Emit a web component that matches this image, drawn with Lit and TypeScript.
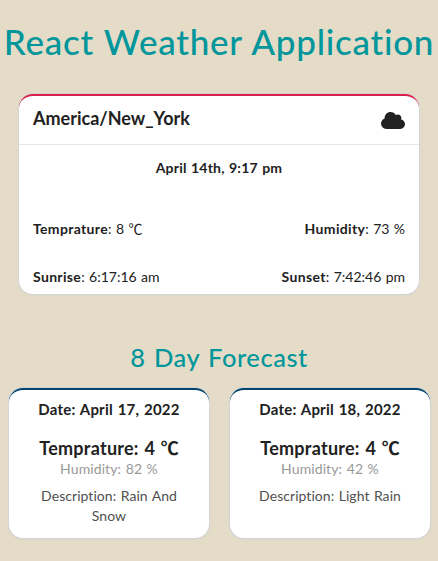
import { LitElement, html, css } from "lit";
import { customElement, property } from "lit/decorators.js";

interface Day {
  date: string;
  temperature: number;
  humidity: number;
  description: string;
}

const DAYS: Day[] = [
  { date: "April 17, 2022", temperature: 4, humidity: 82, description: "Rain And Snow" },
  { date: "April 18, 2022", temperature: 4, humidity: 42, description: "Light Rain" },
];

@customElement("forecast-card")
export class ForecastCard extends LitElement {
  @property({ attribute: false }) day!: Day;

  static styles = css`
    :host {
      display: block;
      box-sizing: border-box;
      width: 200px;
      height: 150px;
      padding: 9px 14px 0;
      border-top: 2px solid #004470;
      border-radius: 14px;
      background: #fff;
      box-shadow: 0 0 0 1px #d4d4d5, 0 1px 3px 0 #d4d4d5;
      text-align: center;
      color: #212121;
    }
    .date {
      font-size: 15px;
      font-weight: 700;
      line-height: 20px;
      letter-spacing: 0.2px;
      word-spacing: 1px;
    }
    .temperature {
      height: 26px;
      margin-top: 16px;
      font-size: 18px;
      font-weight: 700;
      line-height: 26px;
      letter-spacing: 0.25px;
      word-spacing: 1px;
      white-space: nowrap;
    }
    .unit {
      font-family: "Noto Sans CJK JP", sans-serif;
      line-height: 1;
      letter-spacing: 0;
    }
    .humidity {
      margin-top: -1px;
      font-size: 14px;
      line-height: 18px;
      letter-spacing: 0.1px;
      color: #999;
    }
    .description {
      margin-top: 8px;
      padding: 0 10px;
      font-size: 14px;
      line-height: 20px;
      letter-spacing: 0.05px;
      color: #505050;
    }
  `;

  render() {
    const d = this.day;
    return html`
      <div class="date">Date: ${d.date}</div>
      <div class="temperature">Temprature: ${d.temperature} <span class="unit">℃</span></div>
      <div class="humidity">Humidity: ${d.humidity} %</div>
      <div class="description">${`Description: ${d.description}`}</div>
    `;
  }
}

@customElement("app-root")
export class AppRoot extends LitElement {
  static styles = css`
    :host {
      display: block;
      box-sizing: border-box;
      height: 561px;
      overflow: hidden;
      background: #e5dcc7;
      color: #212121;
      font-family: Lato, "DejaVu Sans", sans-serif;
      font-size: 14px;
      font-variant-ligatures: none;
      line-height: 20px;
      word-spacing: 0.8px;
    }
    h1,
    h2 {
      margin: 0;
      color: #00969b;
      font-weight: 500;
      text-align: center;
      white-space: nowrap;
    }
    h1 {
      padding-top: 18px;
      font-size: 35px;
      line-height: 46px;
      letter-spacing: 0.74px;
    }
    h2 {
      margin-top: 46px;
      font-size: 25.5px;
      line-height: 34px;
      letter-spacing: 0.53px;
      word-spacing: 1.5px;
    }
    .current {
      box-sizing: border-box;
      width: 400px;
      height: 200px;
      margin: 30px auto 0;
      border-top: 2px solid #db2149;
      border-radius: 14px;
      background: #fff;
      box-shadow: 0 0 0 1px #d4d4d5, 0 1px 3px 0 #d4d4d5;
    }
    .head {
      display: flex;
      align-items: center;
      justify-content: space-between;
      box-sizing: border-box;
      height: 49px;
      padding: 0 14px;
      border-bottom: 1px solid #e7e7e7;
    }
    .zone {
      padding-bottom: 4px;
      font-size: 18px;
      font-weight: 700;
      line-height: 24px;
    }
    .cloud {
      display: block;
      width: 24px;
      height: 17px;
      fill: #212121;
    }
    .time {
      margin-top: 13px;
      text-align: center;
      font-weight: 700;
      letter-spacing: 0.2px;
    }
    .row {
      display: flex;
      justify-content: space-between;
      height: 20px;
      margin-top: 28px;
      padding: 0 14px;
    }
    .row b {
      letter-spacing: 0.34px;
    }
    .time + .row {
      margin-top: 41px;
    }
    .unit {
      font-family: "Noto Sans CJK JP", sans-serif;
      font-weight: 400;
      line-height: 1;
    }
    .days {
      display: flex;
      justify-content: space-between;
      padding: 14px 8px 0 9px;
    }
  `;

  render() {
    return html`
      <h1>React Weather Application</h1>
      <section class="current">
        <div class="head">
          <span class="zone">America/New_York</span>
          <svg class="cloud" viewBox="0 32 640 448" aria-hidden="true">
            <path d="M537.6 226.6c4.1-10.7 6.4-22.4 6.4-34.6 0-53-43-96-96-96-19.7 0-38.1 6-53.3 16.2C367 64.2 315.3 32 256 32c-88.4 0-160 71.6-160 160 0 2.7.1 5.4.2 8.1C40.2 219.8 0 273.2 0 336c0 79.5 64.5 144 144 144h368c70.7 0 128-57.3 128-128 0-61.9-44-113.6-102.4-125.4z" />
          </svg>
        </div>
        <div class="time">April 14th, 9:17 pm</div>
        <div class="row">
          <span><b>Temprature</b>: 8 <span class="unit">℃</span></span>
          <span><b>Humidity</b>: 73 %</span>
        </div>
        <div class="row">
          <span><b>Sunrise</b>: 6:17:16 am</span>
          <span><b>Sunset</b>: 7:42:46 pm</span>
        </div>
      </section>
      <h2>8 Day Forecast</h2>
      <div class="days">
        ${DAYS.map((d) => html`<forecast-card .day=${d}></forecast-card>`)}
      </div>
    `;
  }
}
